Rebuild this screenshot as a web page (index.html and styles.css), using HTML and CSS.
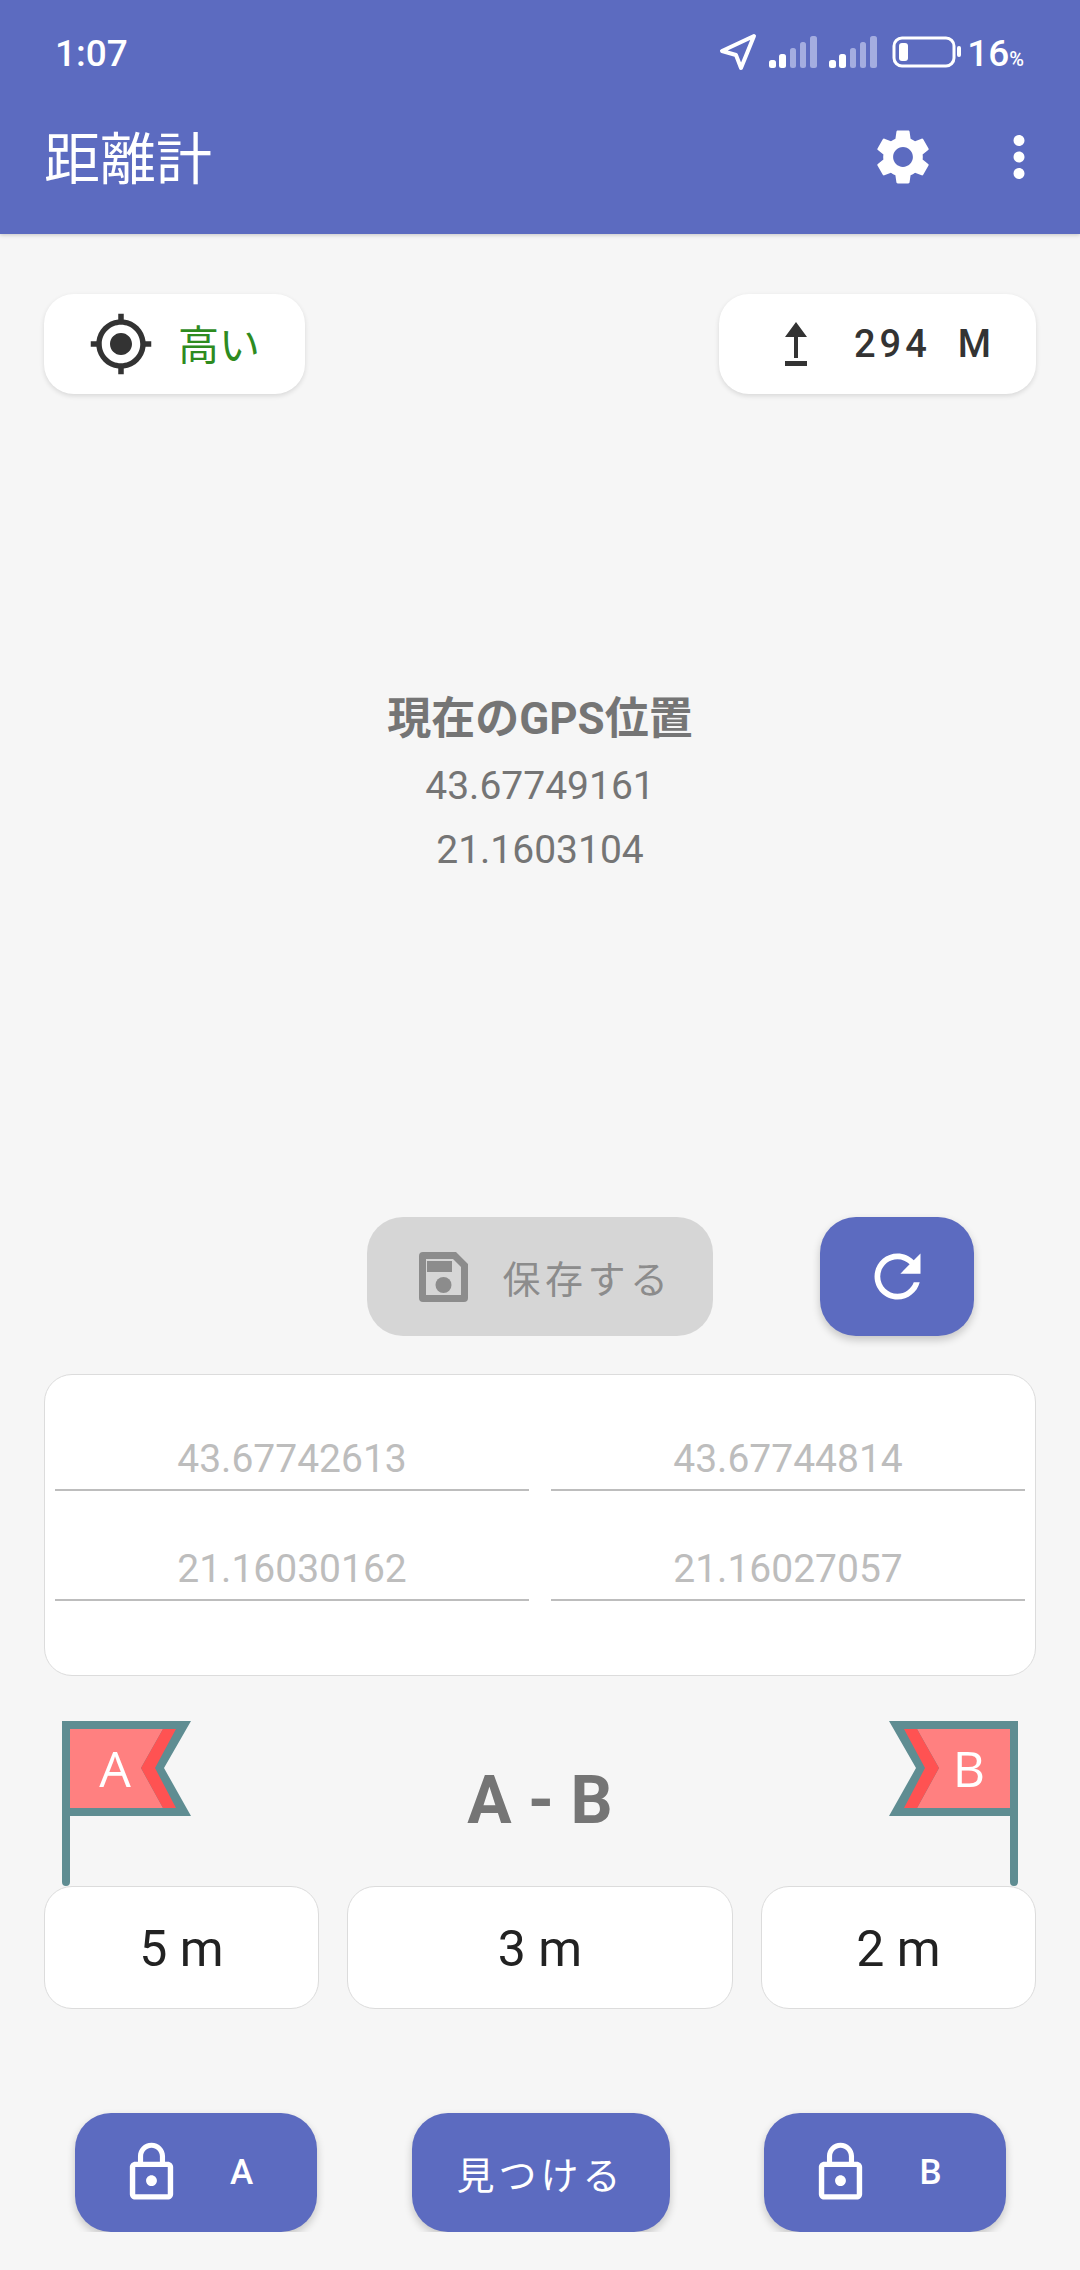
FILE: index.html
```html
<!DOCTYPE html>
<html lang="ja">
<head>
    <meta charset="UTF-8">
    <meta name="viewport" content="width=device-width, initial-scale=1.0">
    <title>距離計</title>
    <link rel="stylesheet" href="styles.css">
</head>
<body>
    <div class="header">
        <div class="status-bar">
            <span class="time">1:07</span>
            <div class="status-icons">
                <svg class="icon-location" width="38" height="38" viewBox="0 0 38 38"><path d="M35 3 3 18l14 4 5 13z" fill="none" stroke="#fff" stroke-width="4" stroke-linejoin="round"/></svg>
                <svg class="icon-signal" width="48" height="32" viewBox="0 0 48 32">
                    <rect x="0" y="24" width="7" height="8" rx="2.5" fill="#fff"/>
                    <rect x="10" y="18" width="7" height="14" rx="2.5" fill="#fff"/>
                    <rect x="21" y="12" width="6" height="20" rx="2.5" fill="#a4ade0"/>
                    <rect x="31" y="6" width="6" height="26" rx="2.5" fill="#a4ade0"/>
                    <rect x="41" y="0" width="7" height="32" rx="2.5" fill="#a4ade0"/>
                </svg>
                <svg class="icon-signal" width="48" height="32" viewBox="0 0 48 32">
                    <rect x="0" y="24" width="7" height="8" rx="2.5" fill="#fff"/>
                    <rect x="10" y="18" width="7" height="14" rx="2.5" fill="#fff"/>
                    <rect x="21" y="12" width="6" height="20" rx="2.5" fill="#a4ade0"/>
                    <rect x="31" y="6" width="6" height="26" rx="2.5" fill="#a4ade0"/>
                    <rect x="41" y="0" width="7" height="32" rx="2.5" fill="#a4ade0"/>
                </svg>
                <svg class="icon-battery" width="69" height="32" viewBox="0 0 69 32">
                    <rect x="2" y="2" width="60" height="28" rx="8" fill="none" stroke="#fff" stroke-width="3"/>
                    <rect x="7" y="7" width="9" height="18" rx="3" fill="#fff"/>
                    <rect x="65" y="10" width="4" height="11" rx="2" fill="#fff"/>
                </svg>
                <span class="battery-text">16<small>%</small></span>
            </div>
        </div>
        <div class="toolbar">
            <span class="app-title">距離計</span>
            <div class="toolbar-actions">
                <svg width="66" height="66" viewBox="0 0 24 24" fill="#fff"><path d="M19.14 12.94c.04-.3.06-.61.06-.94 0-.32-.02-.64-.07-.94l2.03-1.58c.18-.14.23-.41.12-.61l-1.92-3.32c-.12-.22-.37-.29-.59-.22l-2.39.96c-.5-.38-1.03-.7-1.62-.94l-.36-2.54c-.04-.24-.24-.41-.48-.41h-3.84c-.24 0-.43.17-.47.41l-.36 2.54c-.59.24-1.13.57-1.62.94l-2.39-.96c-.22-.08-.47 0-.59.22L2.74 8.87c-.12.21-.08.47.12.61l2.03 1.58c-.05.3-.09.63-.09.94s.02.64.07.94l-2.03 1.58c-.18.14-.23.41-.12.61l1.92 3.32c.12.22.37.29.59.22l2.39-.96c.5.38 1.03.7 1.62.94l.36 2.54c.05.24.24.41.48.41h3.84c.24 0 .44-.17.47-.41l.36-2.54c.59-.24 1.13-.56 1.62-.94l2.39.96c.22.08.47 0 .59-.22l1.92-3.32c.12-.22.07-.47-.12-.61l-2.01-1.58zM12 15.6c-1.98 0-3.6-1.62-3.6-3.6s1.62-3.6 3.6-3.6 3.6 1.62 3.6 3.6-1.62 3.6-3.6 3.6z"/></svg>
                <svg width="66" height="66" viewBox="0 0 24 24" fill="#fff"><path d="M12 8c1.1 0 2-.9 2-2s-.9-2-2-2-2 .9-2 2 .9 2 2 2zm0 2c-1.1 0-2 .9-2 2s.9 2 2 2 2-.9 2-2-.9-2-2-2zm0 6c-1.1 0-2 .9-2 2s.9 2 2 2 2-.9 2-2-.9-2-2-2z"/></svg>
            </div>
        </div>
    </div>

    <div class="content">
        <div class="top-row">
            <div class="pill pill-accuracy">
                <svg width="66" height="66" viewBox="0 0 24 24" fill="#333"><path d="M12 8c-2.21 0-4 1.79-4 4s1.79 4 4 4 4-1.79 4-4-1.79-4-4-4zm8.94 3c-.46-4.17-3.77-7.48-7.94-7.94V1h-2v2.06C6.83 3.52 3.52 6.83 3.06 11H1v2h2.06c.46 4.17 3.77 7.48 7.94 7.94V23h2v-2.06c4.17-.46 7.48-3.77 7.94-7.94H23v-2h-2.06zM12 19c-3.87 0-7-3.13-7-7s3.13-7 7-7 7 3.13 7 7-3.13 7-7 7z"/></svg>
                <span class="accuracy-text">高い</span>
            </div>
            <div class="pill pill-altitude">
                <svg width="22" height="44" viewBox="0 0 22 44" fill="#333">
                    <path d="M11 0 22 15H13V36H9V15H0z"/>
                    <rect x="0" y="39" width="22" height="5"/>
                </svg>
                <span class="altitude-text">294&nbsp; M</span>
            </div>
        </div>

        <div class="gps-info">
            <div class="gps-title">現在のGPS位置</div>
            <div class="gps-value">43.67749161</div>
            <div class="gps-value">21.1603104</div>
        </div>

        <div class="action-row">
            <div class="button button-save">
                <svg width="49" height="50" viewBox="0 0 49 50" fill="#8c8c8c">
                    <path fill-rule="evenodd" d="M4 0H37L49 12V46a4 4 0 0 1-4 4H4a4 4 0 0 1-4-4V4a4 4 0 0 1 4-4zM7 7V43H42V15L34 7z"/>
                    <rect x="8" y="9" width="25" height="11"/>
                    <circle cx="24.500" cy="33" r="8"/>
                </svg>
                <span class="save-text">保存する</span>
            </div>
            <div class="button button-refresh">
                <svg width="69" height="69" viewBox="0 0 24 24" fill="#fff"><path d="M17.65 6.35C16.2 4.9 14.21 4 12 4c-4.42 0-7.99 3.58-7.99 8s3.57 8 7.99 8c3.730 0 6.840-2.550 7.730-6h-2.080c-.82 2.330-3.040 4-5.650 4-3.310 0-6-2.690-6-6s2.690-6 6-6c1.660 0 3.140.69 4.220 1.780L13 11h7V4l-2.350 2.350z"/></svg>
            </div>
        </div>

        <div class="coords-card">
            <div class="coord-field">43.67742613</div>
            <div class="coord-field">43.67744814</div>
            <div class="coord-field">21.16030162</div>
            <div class="coord-field">21.16027057</div>
        </div>

        <div class="flag-row">
            <svg class="flag" width="130" height="165" viewBox="0 0 130 165">
                <path d="M0 0H129L102 47 129 95H8V161a4 4 0 0 1-8 0z" fill="#5f8d92"/>
                <path d="M8 8H101L79 47 101 87H8z" fill="#ff8080"/>
                <path d="M101 8H114L93 47 114 87H101L79 47z" fill="#ff5252"/>
                <text class="flag-letter" x="53" y="66" text-anchor="middle">A</text>
            </svg>
            <div class="distance-title">A - B</div>
            <svg class="flag" width="130" height="165" viewBox="0 0 130 165">
                <path d="M130 0H1L28 47 1 95H122V161a4 4 0 0 0 8 0z" fill="#5f8d92"/>
                <path d="M122 8H29L51 47 29 87H122z" fill="#ff8080"/>
                <path d="M29 8H16L37 47 16 87H29L51 47z" fill="#ff5252"/>
                <text class="flag-letter" x="81" y="66" text-anchor="middle">B</text>
            </svg>
        </div>

        <div class="distance-row">
            <div class="distance-box box-a">5 m</div>
            <div class="distance-box box-mid">3 m</div>
            <div class="distance-box box-b">2 m</div>
        </div>

        <div class="bottom-row">
            <div class="button button-lock">
                <svg width="65" height="65" viewBox="0 0 24 24" fill="#fff"><path d="M12 17c1.100 0 2-.9 2-2s-.9-2-2-2-2 .9-2 2 .9 2 2 2zm6-9h-1V6c0-2.760-2.240-5-5-5S7 3.240 7 6v2H6c-1.100 0-2 .9-2 2v10c0 1.100.9 2 2 2h12c1.100 0 2-.9 2-2V10c0-1.100-.9-2-2-2zM8.900 6c0-1.710 1.390-3.100 3.100-3.100s3.100 1.390 3.100 3.100v2H8.900V6zM18 20H6V10h12v10z"/></svg>
                <span class="lock-letter">A</span>
            </div>
            <div class="button button-find">見つける</div>
            <div class="button button-lock">
                <svg width="65" height="65" viewBox="0 0 24 24" fill="#fff"><path d="M12 17c1.100 0 2-.9 2-2s-.9-2-2-2-2 .9-2 2 .9 2 2 2zm6-9h-1V6c0-2.760-2.240-5-5-5S7 3.240 7 6v2H6c-1.100 0-2 .9-2 2v10c0 1.100.9 2 2 2h12c1.100 0 2-.9 2-2V10c0-1.100-.9-2-2-2zM8.900 6c0-1.710 1.390-3.100 3.100-3.100s3.100 1.390 3.100 3.100v2H8.900V6zM18 20H6V10h12v10z"/></svg>
                <span class="lock-letter">B</span>
            </div>
        </div>
    </div>
</body>
</html>
```

FILE: styles.css
```css
* {
    box-sizing: border-box;
}
body {
    margin: 0;
    padding: 0;
    background-color: #f6f6f6;
    font-family: Roboto, "Noto Sans CJK JP", sans-serif;
    color: #757575;
}

/* header */
.header {
    height: 234px;
    background-color: #5c6bc0;
    color: white;
    box-shadow: 0 1px 4px rgba(0,0,0,0.2);
}
.status-bar {
    height: 104px;
    padding: 0 56px 0 55px;
    display: flex;
    justify-content: space-between;
    align-items: center;
}
.time {
    padding-top: 3px;
    font-size: 37px;
    font-weight: 500;
}
.status-icons {
    display: flex;
    align-items: center;
}
.icon-location {
    margin-right: 12px;
}
.icon-signal {
    margin-right: 12px;
}
.icon-battery {
    margin-left: 3px;
    margin-right: 6px;
}
.battery-text {
    padding-top: 2px;
    font-size: 37px;
    font-weight: 500;
}
.battery-text small {
    font-size: 20px;
}
.toolbar {
    height: 106px;
    padding: 0 28px 0 44px;
    display: flex;
    justify-content: space-between;
    align-items: center;
}
.app-title {
    padding-bottom: 6px;
    font-size: 56px;
}
.toolbar-actions {
    display: flex;
    gap: 50px;
}

/* main column */
.content {
    padding: 60px 44px 0;
}
.top-row {
    display: flex;
    justify-content: space-between;
}
.pill {
    height: 100px;
    background-color: white;
    border-radius: 30px;
    box-shadow: 0 2px 5px rgba(0,0,0,0.12);
    display: flex;
    align-items: center;
}
.pill-accuracy {
    width: 261px;
    padding-left: 44px;
    gap: 24px;
}
.accuracy-text {
    padding-bottom: 4px;
    color: #2e8b1f;
    font-size: 41px;
}
.pill-altitude {
    width: 317px;
    padding-left: 66px;
    gap: 47px;
}
.altitude-text {
    color: #333;
    font-size: 38px;
    font-weight: 500;
    letter-spacing: 4px;
}

.gps-info {
    margin-top: 295px;
    text-align: center;
}
.gps-title {
    height: 65px;
    line-height: 60px;
    font-size: 44px;
    font-weight: 700;
}
.gps-value {
    height: 64px;
    line-height: 64px;
    font-size: 39px;
}

.button {
    height: 119px;
    border-radius: 36px;
    background-color: #5c6bc0;
    color: white;
    box-shadow: 0 4px 8px rgba(0,0,0,0.2);
    display: flex;
    align-items: center;
    justify-content: center;
}
.action-row {
    margin-top: 335px;
    padding-left: 323px;
    display: flex;
    gap: 107px;
}
.button-save {
    width: 346px;
    background-color: #d6d6d6;
    box-shadow: none;
    gap: 34px;
    padding-left: 12px;
}
.save-text {
    color: #8c8c8c;
    font-size: 38px;
    letter-spacing: 4.5px;
}
.button-refresh {
    width: 154px;
}

.coords-card {
    margin-top: 38px;
    height: 302px;
    padding: 54px 10px 0;
    background-color: white;
    border: 1px solid #dcdcdc;
    border-radius: 28px;
    display: grid;
    grid-template-columns: 474px 474px;
    grid-auto-rows: 62px;
    column-gap: 22px;
    row-gap: 48px;
}
.coord-field {
    line-height: 60px;
    text-align: center;
    font-size: 39px;
    color: #bdbdbd;
    border-bottom: 2px solid #bdbdbd;
}

.flag-row {
    margin-top: 45px;
    padding: 0 18px;
    display: flex;
    justify-content: space-between;
    align-items: center;
}
.flag {
    display: block;
}
.flag-letter {
    font-family: "Open Sans", sans-serif;
    font-size: 50px;
    fill: white;
}
.distance-title {
    padding-bottom: 6px;
    font-size: 66px;
    font-weight: 700;
}

.distance-row {
    display: flex;
    justify-content: space-between;
}
.distance-box {
    height: 123px;
    line-height: 124px;
    text-align: center;
    font-size: 50px;
    color: #222;
    background-color: white;
    border: 1px solid #dcdcdc;
    border-radius: 28px;
}
.box-a, .box-b {
    width: 275px;
}
.box-mid {
    width: 386px;
}

.bottom-row {
    margin-top: 104px;
    padding: 0 30px 0 31px;
    display: flex;
    justify-content: space-between;
}
.button-lock {
    width: 242px;
    gap: 46px;
    padding-right: 20px;
}
.lock-letter {
    font-size: 35px;
    font-weight: 500;
}
.button-find {
    width: 258px;
    font-size: 38px;
    letter-spacing: 4px;
}
```
